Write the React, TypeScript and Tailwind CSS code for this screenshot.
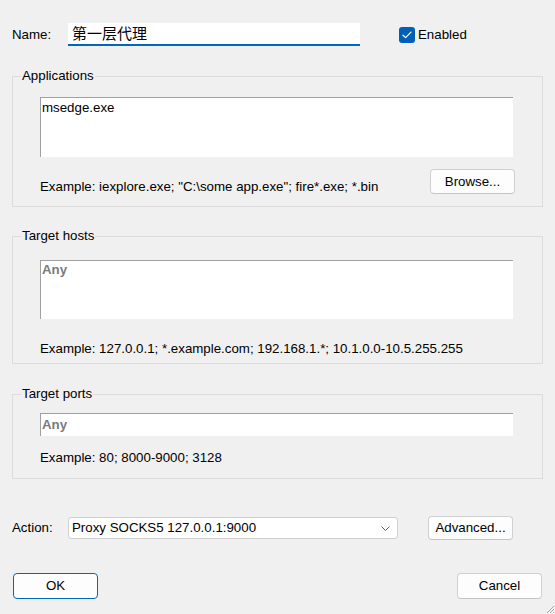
import React from 'react';

const font = { fontFamily: '"Liberation Sans", "Noto Sans CJK SC", Arial, sans-serif' };

function Checkbox() {
  return (
    <span className="flex h-[16px] w-[16px] items-center justify-center rounded-[3px] bg-[#005fb8]">
      <svg width="10" height="8" viewBox="0 0 10 8" fill="none">
        <path d="M1 4.2 L3.6 6.6 L9 1.2" stroke="#ffffff" strokeWidth="1.2" strokeLinecap="round" strokeLinejoin="round" />
      </svg>
    </span>
  );
}

function Button({ label, primary, className }: { label: string; primary?: boolean; className?: string }) {
  return (
    <button
      className={
        'flex items-center justify-center rounded-[4px] bg-[#fdfdfd] leading-[16px] text-black ' +
        (primary ? 'border border-[#0067c0] ' : 'border border-[#d0d0d0] border-b-[#c4c4c4] ') +
        (className ?? '')
      }
    >
      {label}
    </button>
  );
}

function Group({ title, className, children }: { title: string; className?: string; children: React.ReactNode }) {
  return (
    <fieldset className={'mx-[12px] w-[531px] border border-[#dcdcdc] px-[8px] ' + (className ?? '')}>
      <legend className="px-[1px] leading-[16px] text-black">{title}</legend>
      <div className="px-[19px]">{children}</div>
    </fieldset>
  );
}

export default function App() {
  return (
    <div className="relative h-[614px] w-[555px] overflow-hidden bg-[#f0f0f0] text-[13.3px] text-black" style={font}>
      {/* name row */}
      <div className="flex items-center pl-[12px] pt-[23px]">
        <span className="w-[56px] leading-[16px]">Name:</span>
        <div className="flex h-[23px] w-[292px] items-center border-b-2 border-[#0067c0] bg-white pl-[4px] text-[15px] leading-[20px]">
          第一层代理
        </div>
        <div className="ml-[39px] flex items-center gap-[3px]">
          <Checkbox />
          <span className="leading-[16px]">Enabled</span>
        </div>
      </div>

      <Group title="Applications" className="mt-[22px] pb-[12px]">
        <div className="mt-[13px] h-[60px] w-[473px] border-l border-t border-[#a0a0a0] bg-white pl-[1px] pt-[2px] leading-[16px]">
          msedge.exe
        </div>
        <div className="mt-[12px] flex items-end justify-between">
          <span className="mb-[-1px] leading-[16px]">Example: iexplore.exe; "C:\some app.exe"; fire*.exe; *.bin</span>
          <Button label="Browse..." className="h-[25px] w-[85px]" />
        </div>
      </Group>

      <Group title="Target hosts" className="mt-[21px] pb-[6px]">
        <div className="mt-[16px] h-[59px] w-[473px] border-l border-t border-[#a0a0a0] bg-white pl-[1px] pt-[1px] font-bold leading-[16px] text-[#7b7b7b]">
          Any
        </div>
        <div className="mt-[22px] leading-[16px]">Example: 127.0.0.1; *.example.com; 192.168.1.*; 10.1.0.0-10.5.255.255</div>
      </Group>

      <Group title="Target ports" className="mt-[22px] pb-[12px]">
        <div className="mt-[11px] flex h-[23px] w-[473px] items-center border-l border-t border-[#a0a0a0] bg-white pl-[1px] font-bold leading-[16px] text-[#7b7b7b]">
          Any
        </div>
        <div className="mt-[14px] leading-[16px]">Example: 80; 8000-9000; 3128</div>
      </Group>

      {/* action row */}
      <div className="mt-[37px] flex items-center pl-[12px]">
        <span className="w-[56px] leading-[16px]">Action:</span>
        <div className="flex h-[22px] w-[330px] items-center justify-between rounded-[3px] border border-[#d0d0d0] bg-white pl-[3px] pr-[7px] leading-[16px]">
          <span>Proxy SOCKS5 127.0.0.1:9000</span>
          <svg width="9" height="5" viewBox="0 0 9 5" fill="none">
            <path d="M0.5 0.5 L4.5 4.5 L8.5 0.5" stroke="#606060" strokeWidth="1" />
          </svg>
        </div>
        <Button label="Advanced..." className="ml-[30px] h-[24px] w-[85px]" />
      </div>

      {/* bottom buttons */}
      <div className="mt-[33px] flex justify-between pl-[13px] pr-[13px]">
        <Button label="OK" primary className="h-[26px] w-[85px]" />
        <Button label="Cancel" className="h-[26px] w-[85px]" />
      </div>

      {/* resize grip */}
      <svg className="absolute bottom-0 right-0" width="12" height="12" viewBox="0 0 12 12">
        <path d="M11 4 L4 11 M11 7 L7 11 M11 10 L10 11" stroke="#a8a8a8" strokeWidth="1" />
      </svg>
    </div>
  );
}
